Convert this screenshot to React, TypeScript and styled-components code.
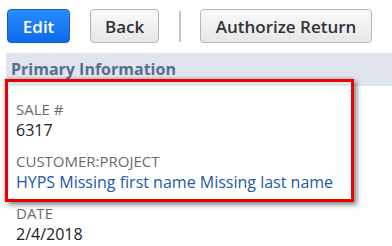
import React from "react";
import styled, { createGlobalStyle, css } from "styled-components";

const Global = createGlobalStyle`
  html, body { margin: 0; padding: 0; background: #ffffff; }
  body { font-family: "Open Sans", "Liberation Sans", sans-serif; }
`;

const Page = styled.div`
  position: relative;
  width: 392px;
  height: 246px;
  overflow: hidden;
  background: #fff;
`;

const Toolbar = styled.div`
  display: flex;
  align-items: center;
  padding: 9px 0 0 7px;
  height: 34px;
`;

const Button = styled.button<{ $primary?: boolean; $w: number }>`
  box-sizing: border-box;
  height: 34px;
  width: ${(p) => p.$w}px;
  border-radius: 4px;
  font-family: "Open Sans", "Liberation Sans", sans-serif;
  font-size: 17px;
  font-weight: 600;
  padding: 0;
  margin-right: 20px;
  ${(p) =>
    p.$primary
      ? css`
          background: linear-gradient(#2a8cff, #0d6ae8);
          border: 1px solid #1060cc;
          color: #fff;
        `
      : css`
          background: linear-gradient(#fafafa, #e7e7e7);
          border: 1px solid #b5b5b5;
          color: #333;
        `}
`;

const Separator = styled.div`
  width: 2px;
  height: 31px;
  background: #c4c4c4;
  margin-right: 19px;
`;

const SectionHeader = styled.div`
  margin: 10px 0 0 6px;
  height: 33px;
  background: #dfe4ed;
  color: #5a6d91;
  font-size: 16px;
  font-weight: 700;
  line-height: 33px;
  padding-left: 5px;
`;

const Fields = styled.div`
  display: flex;
  flex-direction: column;
  padding: 14px 0 0 16px;
  gap: 11px;
`;

const Field = styled.div`
  display: flex;
  flex-direction: column;
`;

const Label = styled.div`
  font-size: 15px;
  line-height: 19px;
  color: #6b6b6b;
  text-transform: uppercase;
`;

const Value = styled.div<{ $link?: boolean }>`
  font-size: 16px;
  line-height: 22px;
  color: ${(p) => (p.$link ? "#2458a8" : "#222")};
`;

const Highlight = styled.div`
  position: absolute;
  left: 5px;
  top: 79px;
  width: 349px;
  height: 123px;
  box-sizing: border-box;
  border: 3px solid #f00000;
  box-shadow: 3px 3px 5px rgba(0, 0, 0, 0.45), -1px -1px 3px rgba(0,0,0,0.2);
  pointer-events: none;
`;

export default function App() {
  return (
    <Page>
      <Global />
      <Toolbar>
        <Button $primary $w={65}>Edit</Button>
        <Button $w={71}>Back</Button>
        <Separator />
        <Button $w={177}>Authorize Return</Button>
      </Toolbar>
      <SectionHeader>Primary Information</SectionHeader>
      <Fields>
        <Field>
          <Label>Sale #</Label>
          <Value>6317</Value>
        </Field>
        <Field>
          <Label>Customer:Project</Label>
          <Value $link>HYPS Missing first name Missing last name</Value>
        </Field>
        <Field>
          <Label>Date</Label>
          <Value>2/4/2018</Value>
        </Field>
      </Fields>
      <Highlight />
    </Page>
  );
}
